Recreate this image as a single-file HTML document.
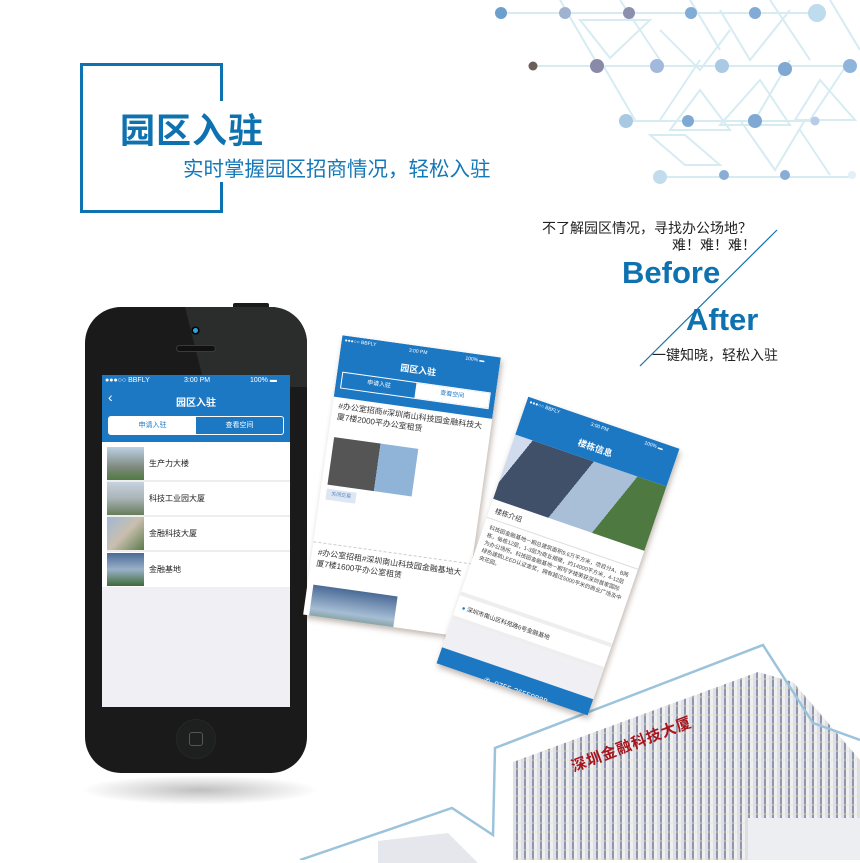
<!DOCTYPE html>
<html><head><meta charset="utf-8"><style>
*{margin:0;padding:0;box-sizing:border-box}
body{width:860px;height:860px;overflow:hidden;background:#fff;position:relative;font-family:"Liberation Sans","Noto Sans CJK SC",sans-serif}
.a{position:absolute}
.blue{background:#1d78c4}
.scr2 .t,.scr3 .t{font-size:7px;color:#333}
</style></head><body>
<svg class="a" style="left:480px;top:0" width="380" height="200" viewBox="480 0 380 200">
<g stroke="#d6ecf2" stroke-width="2" fill="none">
<path d="M501 13H817M533 66H850M626 121H815M660 177H852"/>
<path d="M580 20l30 38 40-38zM660 30l40 40 30-40M720 10l30 50 40-50M600 60l35 60M700 90l-30 40h60zM760 80l-40 45h70zM820 80l-25 40h60zM650 135l35 30h35l-35-30zM740 120l35 50 30-50M800 130l30 45"/>
<path d="M560 0l35 60M620 0l40 60M690 0l30 50M770 0l40 60M830 0l30 50M700 60l-40 60M790 60l-35 60M850 60l-40 60"/>
</g>
<g>
<circle cx="501" cy="13" r="6" fill="#6d9fcd"/><circle cx="565" cy="13" r="6" fill="#9fb3d1"/><circle cx="629" cy="13" r="6" fill="#8d8fae"/><circle cx="691" cy="13" r="6" fill="#82acd6"/><circle cx="755" cy="13" r="6" fill="#82acd6"/><circle cx="817" cy="13" r="9" fill="#bddcee"/>
<circle cx="533" cy="66" r="4.5" fill="#6b5d58"/><circle cx="597" cy="66" r="7" fill="#8a8aa8"/><circle cx="657" cy="66" r="7" fill="#a1b9dc"/><circle cx="722" cy="66" r="7" fill="#aac9e4"/><circle cx="785" cy="69" r="7" fill="#7fa9d3"/><circle cx="850" cy="66" r="7" fill="#90b5dc"/>
<circle cx="626" cy="121" r="7" fill="#a7c9e2"/><circle cx="688" cy="121" r="6" fill="#7fa9d3"/><circle cx="755" cy="121" r="7" fill="#7fa9d3"/><circle cx="815" cy="121" r="4.5" fill="#b6cde9"/>
<circle cx="660" cy="177" r="7" fill="#c3dcec"/><circle cx="724" cy="175" r="5" fill="#89acd5"/><circle cx="785" cy="175" r="5" fill="#89acd5"/><circle cx="852" cy="175" r="4" fill="#e4eff6"/>
</g></svg>

<div class="a" style="left:80px;top:63px;width:143px;height:3px;background:#0f72b0"></div>
<div class="a" style="left:80px;top:63px;width:3px;height:150px;background:#0f72b0"></div>
<div class="a" style="left:80px;top:210px;width:143px;height:3px;background:#0f72b0"></div>
<div class="a" style="left:220px;top:63px;width:3px;height:38px;background:#0f72b0"></div>
<div class="a" style="left:220px;top:182px;width:3px;height:31px;background:#0f72b0"></div>
<div class="a" style="left:120px;top:103px;font-size:35px;font-weight:bold;color:#0f72b0;letter-spacing:1px">园区入驻</div>
<div class="a" style="left:183px;top:152px;font-size:20.5px;color:#1478b8">实时掌握园区招商情况，轻松入驻</div>

<div class="a" style="left:542px;top:218px;font-size:14px;color:#222">不了解园区情况，寻找办公场地？</div>
<div class="a" style="left:672px;top:235px;font-size:14px;color:#222">难！难！难！</div>
<div class="a" style="left:622px;top:255px;font-size:31px;font-weight:bold;color:#0f72b0">Before</div>
<div class="a" style="left:686px;top:302px;font-size:31px;font-weight:bold;color:#0f72b0">After</div>
<div class="a" style="left:652px;top:345px;font-size:14px;color:#222">一键知晓，轻松入驻</div>

<!-- building -->
<div class="a" style="left:513px;top:672px;width:347px;height:188px;background:repeating-linear-gradient(90deg,#dcdfe8 0 3px,#8e96ab 3px 5px,#f0f0f4 5px 8px);clip-path:polygon(0 90px,245px 0,280px 10px,347px 88px,347px 188px,0 188px)"></div>
<div class="a" style="left:513px;top:672px;width:347px;height:188px;background:repeating-linear-gradient(0deg,rgba(230,225,190,.35) 0 2px,transparent 2px 9px);clip-path:polygon(0 90px,245px 0,280px 10px,347px 88px,347px 188px,0 188px)"></div>
<div class="a" style="left:748px;top:818px;width:112px;height:42px;background:#eceef2"></div>
<div class="a" style="left:378px;top:833px;width:100px;height:30px;background:#e6e7ec;clip-path:polygon(0 8px,70px 0,100px 30px,0 30px)"></div>
<div class="a" style="left:568px;top:757px;font-size:15px;font-weight:bold;color:#a8141c;transform:rotate(-21deg);transform-origin:left top;letter-spacing:1px">深圳金融科技大厦</div>
<svg class="a" style="left:0;top:0" width="860" height="860"><line x1="777" y1="230" x2="640" y2="366" stroke="#0f72b0" stroke-width="1.2"/>
<polyline points="300,860 452,808 493,835 495,748 763,645 813,723 860,740" fill="none" stroke="#9cc3dc" stroke-width="2.5"/>
</svg>

<!-- phone -->
<div class="a" style="left:80px;top:775px;width:240px;height:30px;border-radius:50%;background:radial-gradient(ellipse,rgba(0,0,0,.25),transparent 70%)"></div>
<div class="a" style="left:233px;top:303px;width:36px;height:6px;background:#1b1b1b;border-radius:2px"></div>
<div class="a" style="left:85px;top:307px;width:222px;height:466px;border-radius:36px;background:#1a1a1a"></div>
<div class="a" style="left:85px;top:307px;width:222px;height:466px;border-radius:36px;background:#2b2c2c;clip-path:polygon(100px 0,222px 0,222px 80px,120px 80px)"></div>
<div class="a" style="left:193px;top:328px;width:5px;height:5px;border-radius:50%;background:#2aa6e0;box-shadow:0 0 0 1.5px #000"></div>
<div class="a" style="left:176px;top:345px;width:40px;height:7px;border-radius:4px;background:#111;border:1px solid #3a3a3a"></div>
<div class="a" style="left:176px;top:719px;width:40px;height:40px;border-radius:50%;background:#1e1f1f;border:1px solid #262727"></div>
<div class="a" style="left:189px;top:732px;width:14px;height:14px;border-radius:3px;border:1.5px solid #555"></div>
<div class="a" style="left:102px;top:375px;width:188px;height:332px;background:#efeff4;overflow:hidden">
 <div class="blue" style="height:67px;position:relative;color:#fff">
  <div class="a" style="left:3px;top:2px;font-size:7px">●●●○○ BBFLY</div>
  <div class="a" style="left:82px;top:2px;font-size:7px">3:00 PM</div>
  <div class="a" style="left:148px;top:2px;font-size:7px">100% ▬</div>
  <div class="a" style="left:6px;top:14px;font-size:14px">‹</div>
  <div class="a" style="left:0;width:188px;top:19px;text-align:center;font-size:10px;font-weight:bold">园区入驻</div>
  <div class="a" style="left:6px;top:41px;width:176px;height:19px;border:1px solid #fff;border-radius:3px;display:flex;font-size:7px">
   <div style="flex:1;background:#fff;color:#1d78c4;text-align:center;line-height:17px">申请入驻</div>
   <div style="flex:1;text-align:center;line-height:17px">查看空间</div></div>
 </div>
 <div style="background:#fff;padding-top:5px;height:145px">
  <div style="height:35px;display:flex;align-items:center;border-bottom:2px solid #eee;margin-left:5px"><div style="width:37px;height:33px;background:linear-gradient(#bcd1e4,#808a80 60%,#4f7a42)"></div><span style="font-size:8px;margin-left:5px;color:#222">生产力大楼</span></div>
  <div style="height:35px;display:flex;align-items:center;border-bottom:2px solid #eee;margin-left:5px"><div style="width:37px;height:33px;background:linear-gradient(#c6d2de,#a9b4b6 50%,#677c5a)"></div><span style="font-size:8px;margin-left:5px;color:#222">科技工业园大厦</span></div>
  <div style="height:35px;display:flex;align-items:center;border-bottom:2px solid #eee;margin-left:5px"><div style="width:37px;height:33px;background:linear-gradient(135deg,#9fb8d6,#c9bfae 50%,#5c7b4c)"></div><span style="font-size:8px;margin-left:5px;color:#222">金融科技大厦</span></div>
  <div style="height:35px;display:flex;align-items:center;margin-left:5px"><div style="width:37px;height:33px;background:linear-gradient(#4a6a96,#9ab1c8 50%,#3f6a38)"></div><span style="font-size:8px;margin-left:5px;color:#222">金融基地</span></div>
 </div>
</div>

<!-- screen 2 -->
<div class="a scr2" style="left:322px;top:345px;width:160px;height:282px;transform:rotate(8deg);background:#fff;box-shadow:2px 3px 6px rgba(80,50,30,.35);overflow:hidden">
 <div class="blue" style="height:62px;position:relative;color:#fff">
  <div class="a" style="left:3px;top:2px;font-size:5px">●●●○○ BBFLY</div><div class="a" style="left:68px;top:3px;font-size:5px">3:00 PM</div><div class="a" style="left:125px;top:3px;font-size:5px">100% ▬</div>
  <div class="a" style="left:0;width:160px;top:17px;text-align:center;font-size:9px;font-weight:bold">园区入驻</div>
  <div class="a" style="left:5px;top:36px;width:150px;height:17px;border:1px solid #fff;display:flex;font-size:6px"><div style="flex:1;text-align:center;line-height:15px">申请入驻</div><div style="flex:1;background:#fff;color:#1d78c4;text-align:center;line-height:15px">查看空间</div></div>
 </div>
 <div class="t" style="padding:3px 6px;font-size:8px;line-height:11px">#办公室招商#深圳南山科技园金融科技大厦7楼2000平办公室租赁</div>
 <div style="margin:12px 6px 0;width:85px;height:48px;background:linear-gradient(90deg,#555 0 55%,#8fb4d8 55%)"></div>
 <div style="margin:4px 6px;width:30px;height:11px;background:#dde6f2;font-size:5px;color:#5b86c0;text-align:center;line-height:11px">关闭交易</div>
 <div style="height:40px;border-bottom:1px dashed #ccc"></div>
 <div class="t" style="padding:4px 6px;font-size:8px;line-height:11px">#办公室招租#深圳南山科技园金融基地大厦7楼1600平办公室租赁</div>
 <div style="margin:12px 6px 0;width:85px;height:48px;background:linear-gradient(#4a6a96,#a6bdd4 50%,#3f6a38)"></div>
</div>

<!-- screen 3 -->
<div class="a scr3" style="left:478px;top:415px;width:160px;height:282px;transform:rotate(19deg);background:#fff;box-shadow:2px 3px 6px rgba(80,50,30,.35);overflow:hidden">
 <div class="blue" style="height:40px;position:relative;color:#fff">
  <div class="a" style="left:3px;top:2px;font-size:5px">●●●○○ BBFLY</div><div class="a" style="left:68px;top:3px;font-size:5px">3:00 PM</div><div class="a" style="left:125px;top:3px;font-size:5px">100% ▬</div>
  <div class="a" style="left:0;width:160px;top:20px;text-align:center;font-size:9px;font-weight:bold">楼栋信息</div>
 </div>
 <div style="height:68px;background:linear-gradient(110deg,#d0dced 0 10%,#3f5068 10% 45%,#a9bfd8 45% 70%,#4e7a42 70%)"></div>
 <div class="t" style="padding:6px 6px 3px;font-size:7px;border-bottom:1px solid #ddd">楼栋介绍</div>
 <div class="t" style="padding:5px 6px;font-size:5.5px;line-height:8px;color:#444;height:78px">科技园金融基地一期总建筑面积9.6万平方米，项目分A、B两栋，每栋12层，1-3层为商业裙楼，约14000平方米，4-12层为办公场所。科技园金融基地一期写字楼荣获深圳首家国际绿色建筑LEED认证金奖，拥有超过5000平米的商业广场及中央花园。</div>
 <div class="t" style="padding:6px 6px;font-size:6px;border-top:4px solid #eee;border-bottom:4px solid #eee"><span style="color:#1d78c4">●</span> 深圳市南山区科苑路6号金融基地</div>
 <div style="height:30px;background:#efeff4"></div>
 <div class="blue" style="height:40px;color:#fff;font-size:8px;line-height:36px;padding-left:50px">✆ &nbsp;0755-26559888</div>
</div>
</body></html>
